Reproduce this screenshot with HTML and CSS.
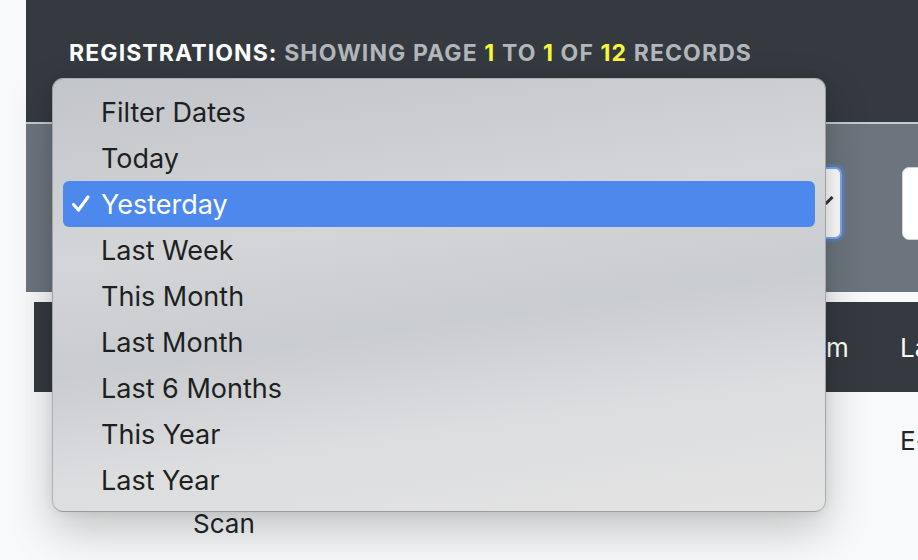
FILE: index.html
```html
<!DOCTYPE html>
<html lang="en">
<head>
  <meta charset="UTF-8">
  <title>Registrations</title>
  <link rel="stylesheet" href="styles.css">
</head>
<body>

<!-- Card -->
<div class="page">
  <div class="card-head">
    <h2 class="title">REGISTRATIONS: <span class="muted">SHOWING PAGE <span class="hi">1</span> TO <span class="hi">1</span> OF <span class="hi">12</span> RECORDS</span></h2>
  </div>

  <!-- Filters -->
  <div class="filters">
    <div class="select focus">
      <span class="caret"></span>
    </div>
    <div class="field"></div>
  </div>

  <!-- Table -->
  <table class="grid">
    <colgroup>
      <col class="c1"><col class="c2"><col class="c3"><col class="c4">
    </colgroup>
    <thead>
      <tr><th></th><th></th><th>Platform</th><th>Last Seen</th></tr>
    </thead>
    <tbody>
      <tr><td></td><td class="bottom">Scan</td><td></td><td>E-mail</td></tr>
    </tbody>
  </table>
</div>

<!-- Native select popup -->
<div class="popup">
  <div class="opt"><span class="mark"></span>Filter Dates</div>
  <div class="opt"><span class="mark"></span>Today</div>
  <div class="opt active"><span class="mark"><svg width="20" height="20" viewBox="0 0 20 20"><polyline points="2.5,10.5 7.5,16 17,3" fill="none" stroke="#fff" stroke-width="3.2" stroke-linecap="round" stroke-linejoin="round"/></svg></span>Yesterday</div>
  <div class="opt"><span class="mark"></span>Last Week</div>
  <div class="opt"><span class="mark"></span>This Month</div>
  <div class="opt"><span class="mark"></span>Last Month</div>
  <div class="opt"><span class="mark"></span>Last 6 Months</div>
  <div class="opt"><span class="mark"></span>This Year</div>
  <div class="opt"><span class="mark"></span>Last Year</div>
</div>

</body>
</html>
```

FILE: styles.css
```css
* {
  box-sizing: border-box;
}
body {
  margin: 0;
  font-family: Inter, 'Liberation Sans', sans-serif;
  background: #f8f9fa;
  color: #212529;
  overflow: hidden;
  width: 918px;
  height: 560px;
  position: relative;
}
.page {
  padding-left: 26px;
}
/* Header */
.card-head {
  height: 124px;
  background: #343a40;
  border-bottom: 2px solid #c8cacd;
  padding: 40px 0 0 43px;
}
.title {
  margin: 0;
  font-size: 23px;
  font-weight: 700;
  letter-spacing: 1.1px;
  line-height: 26px;
  color: #fff;
  white-space: nowrap;
}
.title .muted {
  color: #b3b6ba;
}
.title .hi {
  color: #f9f63e;
}
/* Filters */
.filters {
  height: 168px;
  background: #6c757d;
  display: flex;
  gap: 60px;
  padding: 43px 0 0 36px;
}
.select {
  position: relative;
  flex: 0 0 780px;
  height: 72px;
  background: #fff;
  border-radius: 7px;
  border: 2px solid #80a9ec;
  box-shadow: 0 0 0 3px rgba(80, 140, 235, 0.45);
}
.caret {
  position: absolute;
  right: 6px;
  top: 30px;
  width: 10px;
  height: 3px;
  background: #333;
  transform: rotate(-45deg);
}
.field {
  flex: 0 0 200px;
  height: 73px;
  background: #fff;
  border-radius: 7px;
  border: 1px solid #ced4da;
}
/* Table */
.grid {
  margin: 10px 0 0 8px;
  border-collapse: collapse;
  table-layout: fixed;
  width: 1000px;
  font-size: 26px;
}
.c1 { width: 146px; }
.c2 { width: 553px; }
.c3 { width: 154px; }
.c4 { width: 147px; }
.grid th {
  background: #343a40;
  color: #fff;
  font-weight: 400;
  text-align: left;
  height: 90px;
  padding: 0 13px;
  white-space: nowrap;
}
.grid td {
  vertical-align: top;
  padding: 28px 13px 0;
  line-height: 41px;
  height: 152px;
  white-space: nowrap;
}
.grid td.bottom {
  vertical-align: bottom;
  padding-bottom: 0;
}
/* Popup menu */
.popup {
  position: absolute;
  left: 52px;
  top: 78px;
  width: 774px;
  height: 434px;
  padding: 10px 10px 9px;
  border-radius: 11px;
  border: 1px solid rgba(0, 0, 0, 0.22);
  background: linear-gradient(172deg, #c2c5c9 0%, #d3d5d8 35%, #c9ccd0 55%, #dcdddf 75%, #e4e4e4 100%);
  box-shadow: 0 18px 45px rgba(0, 0, 0, 0.22), 0 0 12px rgba(0, 0, 0, 0.08);
}
.opt {
  display: flex;
  align-items: center;
  height: 46px;
  font-size: 27px;
  color: #1e1f21;
  border-radius: 6px;
}
.opt.active {
  background: #4d89ec;
  color: #fff;
}
.mark {
  flex: 0 0 38px;
  display: flex;
  padding-left: 8px;
}
```
